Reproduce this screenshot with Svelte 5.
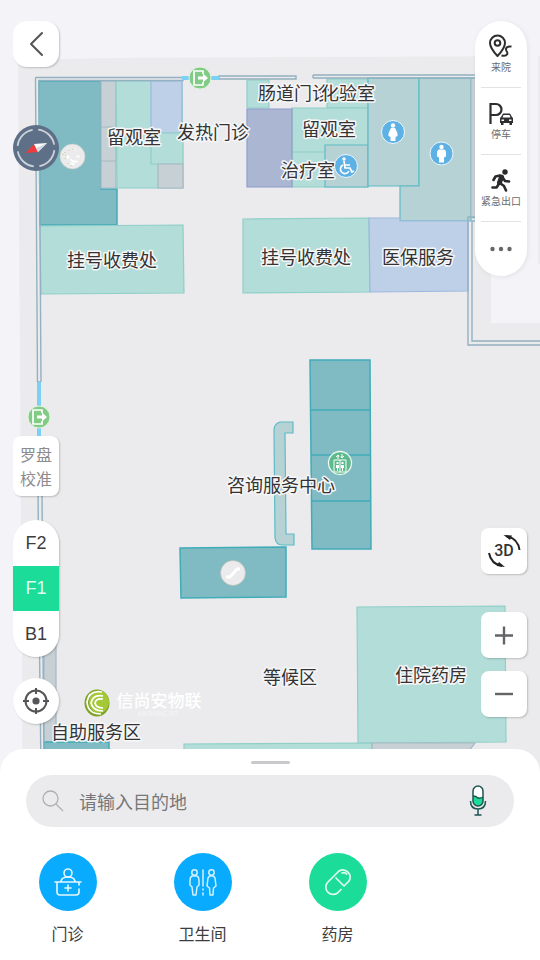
<script>
  let floor = $state('F1');
  let query = $state('');
  const floors = ['F2', 'F1', 'B1'];

  const rooms = [
    { kind: 'teal', d: 'M39 81H101V189H117V225H40Z' },
    { kind: 'grey', d: 'M101 81H116V188H101ZM101 127H116M101 161H116' },
    { kind: 'mint', d: 'M116 81H182L183 188H117Z' },
    { kind: 'blue', d: 'M151 81H182V133H151Z' },
    { kind: 'mint', d: 'M151 133H183V164H151Z' },
    { kind: 'grey', d: 'M158 164H183V188H158Z' },
    { kind: 'mint', d: 'M40 226L183 225L184 293L41 294Z' },
    { kind: 'mint', d: 'M247 80H269V108H247Z' },
    { kind: 'mint', d: 'M327 79H368V108H327Z' },
    { kind: 'mint', d: 'M292 108H368V187H292ZM292 152H325' },
    { kind: 'violet', d: 'M247 109H292V187H247Z' },
    { kind: 'sage', d: 'M325 145H368V187H325Z' },
    { kind: 'sage', d: 'M368 78H419V186H368Z' },
    { kind: 'sage', d: 'M419 78H471V221H400V186H419Z' },
    { kind: 'mint', d: 'M243 219L369 218L370 292L243 293Z' },
    { kind: 'blue', d: 'M369 218H400V221H468V291L370 292Z' },
    { kind: 'grey', d: 'M471 78H480V218H471Z' },
    { kind: 'teal', d: 'M310 360H370L371 549H312ZM311 410H370M311 455H371M311 501H371' },
    { kind: 'sage', d: 'M293 422H280Q274 424 274 430L275 538Q276 545 282 545H294V534H286L285 433H293Z' },
    { kind: 'teal', d: 'M180 548L286 547V597L181 598Z' },
    { kind: 'mint', d: 'M357 607L505 606L506 742L358 743Z' },
    { kind: 'mint', d: 'M184 744L372 743V760H184Z' },
    { kind: 'grey', d: 'M372 743H475L462 760H372Z' },
    { kind: 'grey', d: 'M44 640H56V742H44Z' },
    { kind: 'teal', d: 'M44 742H109V770H44Z' }
  ];

  const labels = [
    { x: 134, y: 144, t: '留观室' },
    { x: 213, y: 139, t: '发热门诊' },
    { x: 294, y: 100, t: '肠道门诊' },
    { x: 348, y: 100, t: '化验室' },
    { x: 329, y: 136, t: '留观室' },
    { x: 308, y: 177, t: '治疗室' },
    { x: 112, y: 267, t: '挂号收费处' },
    { x: 306, y: 264, t: '挂号收费处' },
    { x: 418, y: 264, t: '医保服务' },
    { x: 281, y: 492, t: '咨询服务中心' },
    { x: 290, y: 684, t: '等候区' },
    { x: 431, y: 682, t: '住院药房' },
    { x: 96, y: 739, t: '自助服务区' }
  ];
  const exits = [{ x: 200, y: 78 }, { x: 39, y: 417 }];
</script>

<main class="app">
  <svg class="map" viewBox="0 0 540 960" preserveAspectRatio="xMidYMin slice" role="img" aria-label="F1">
    <path class="ground" d="M18 60L115 58L540 56V960H24Z" />
    <path class="outside" d="M491 56H538V264H540V323H491Z" />
    {#each rooms as r}<path class={r.kind} d={r.d} />{/each}
    <g class="wall">
      <path d="M35.500 77.500H183V80.500H39L41 382M35.500 77.500L37.500 382M37.500 382H41M38 490L39.500 650L41 770M42 490L43 650L44 770" />
      <path d="M219 76H296V79H219ZM313 75H480M313 78H480M313 75V78" />
      <path d="M480 217H468V345H540M480 221H472V341H540" />
    </g>
    <path class="door" d="M182 78H219M39 382V440" />
    <g class="names">
      {#each labels as l}<text x={l.x} y={l.y}>{l.t}</text>{/each}
    </g>
    {#each exits as e}
      <g transform="translate({e.x} {e.y})">
        <circle r="11" fill="#82cb84" stroke="#e4f2e5" stroke-width="1" />
        <path d="M3-4V-7H-6V7H3V4" fill="none" stroke="#fff" stroke-width="1.700" />
        <path d="M-2-1.500H3V-4.500L8 0L3 4.500V1.500H-2Z" fill="#fff" />
      </g>
    {/each}
    <g transform="translate(393 132)">
      <circle r="11.500" fill="#5eb1e5" stroke="#eff8fd" />
      <circle cy="-6.500" r="2.200" fill="#fff" />
      <path d="M-2-4H2Q5 1 4.500 4L2.500 5V9H-2.500V5L-4.500 4Q-5 1-2-4Z" fill="#fff" />
    </g>
    <g transform="translate(441.500 153.500)">
      <circle r="11.500" fill="#5eb1e5" stroke="#eff8fd" />
      <circle cy="-6.500" r="2.200" fill="#fff" />
      <path d="M-3-4H3L4.500-2V3L2.500 4V9H-2.500V4L-4.500 3V-2Z" fill="#fff" />
    </g>
    <g transform="translate(346 166)">
      <circle r="11.500" fill="#5eb1e5" stroke="#eff8fd" />
      <circle cx="-2" cy="-7" r="1.700" fill="#fff" />
      <path d="M-2-5L-1 2H4L6 6L8 5M-1-1H4M-3-1A4.500 4.500 0 1 0 3 5" fill="none" stroke="#fff" stroke-width="1.700" />
    </g>
    <g transform="translate(340 463)">
      <circle r="11.500" fill="#5cba8c" stroke="#eef8f2" stroke-width="1.300" />
      <path d="M-6-3H6V9H-6ZM0-3V9M-2-4V-8M-4-6L-2-8L-1-6M2-9V-5M1-7L2-5L4-7" fill="none" stroke="#fff" />
      <path d="M-4 2H-1V5H-2V8H-3V5H-4ZM1 2H4V5H3V8H2V5H1ZM-3.500-1H-1.500V1H-3.500ZM1.500-1H3.500V1H1.500Z" fill="#fff" />
    </g>
    <g transform="translate(233 573)">
      <circle r="12.500" fill="#ebebed" stroke="#b9b9ad" stroke-width=".600" />
      <path d="M-7 4H-3L4-4H7" fill="none" stroke="#fff" stroke-width="3" stroke-linejoin="round" />
    </g>
    <g transform="translate(72.500 156.500)">
      <circle r="12.500" fill="#ebebed" stroke="#c8cdbf" stroke-width=".600" />
      <path d="M-6-1L-4 1L-5 2M-2 3L1 5H5M4 0H7M2-7H3M-2 7L2 8" fill="none" stroke="#fff" stroke-width="2" />
      <path d="M-10-2H-9M-8-4H-7M-7-1H-6M-8 2H-7M-5 7H-4M-2 9H-1M0-7H1M-4-6H-3" stroke="#c9c984" />
    </g>
    <g class="brand">
      <ellipse cx="97" cy="703" rx="12.500" ry="13.500" fill="#7fa329" />
      <ellipse cx="99" cy="702" rx="10" ry="11" fill="#a5c936" />
      <path d="M102 692Q89 690 87 702Q88 714 101 714M103 696Q93 694 91 703Q93 711 103 711M103 699Q96 698 95 703Q96 708 103 708" fill="none" stroke="#fff" stroke-width="1.700" />
      <text class="brand-name" x="159" y="707">信尚安物联</text>
      <text class="brand-sub" x="158" y="716">XINSHANG IOT</text>
    </g>
  </svg>

  <div class="controls">
    <div class="left">
      <button class="tile" aria-label="返回">
        <svg width="46" height="46" viewBox="0 0 46 46"><path d="M29 12L18 23L29 34" fill="none" stroke="#555558" stroke-width="2" stroke-linecap="round" stroke-linejoin="round" /></svg>
      </button>
      <button class="compass" aria-label="指南针">
        <svg width="46" height="46" viewBox="0 0 46 46">
          <circle cx="23" cy="23" r="23" fill="#5e7087" />
          <circle cx="23" cy="23" r="18.500" fill="none" stroke="#ccd3da" stroke-width="1.800" pathLength="100" stroke-dasharray="20 5" stroke-dashoffset="-2" />
          <path d="M12.500 28L21 19L25 27Z" fill="#ed3b3e" /><path d="M21 19L34 18L25 27Z" fill="#fff" /><path d="M25 27L34 18L23 23Z" fill="#d5d9de" />
        </svg>
      </button>
      <button class="tile calibrate">罗盘<br />校准</button>
      <div class="floors">
        {#each floors as f}
          <button class:active={floor === f} aria-pressed={floor === f} onclick={() => (floor = f)}>{f}</button>
        {/each}
      </div>
      <button class="tile round" aria-label="定位">
        <svg width="46" height="46" viewBox="0 0 46 46"><g fill="none" stroke="#565659" stroke-width="2"><circle cx="23" cy="23" r="10.500" /><path d="M23 10V16M23 30V36M10 23H16M30 23H36" /></g><circle cx="23" cy="23" r="3.600" fill="#565659" /></svg>
      </button>
    </div>

    <div class="right">
      <nav class="quick">
        <button>
          <svg width="26" height="26" viewBox="0 0 26 26" fill="none" stroke="#2e2e30" stroke-width="2"><path d="M9.500 23Q2 15 2 10A7.500 7.500 0 0 1 17 10Q17 15 9.500 23Z" stroke-linejoin="round" /><circle cx="9.500" cy="10" r="2.800" /><path d="M13.500 22.500C20 24 20 20 18.500 18C17 15 19 13 23.500 13.500" /></svg>
          <span>来院</span>
        </button>
        <button>
          <svg width="26" height="26" viewBox="0 0 26 26"><path d="M2.500 24V4H8A5.500 5.500 0 0 1 8 15H2.500" fill="none" stroke="#2e2e30" stroke-width="2.200" /><path d="M13 17L15 13.500H22L24 17L25 18V23H24V25H21.500V23H15.500V25H13V23H12V18Z" fill="#2e2e30" /><path d="M15.500 15H21.500L22.500 17.500H14.500ZM13.500 19.500H16V21H13.500ZM21 19.500H23.500V21H21Z" fill="#fff" /></svg>
          <span>停车</span>
        </button>
        <button>
          <svg width="26" height="26" viewBox="0 0 26 26" fill="none" stroke="#2a2a2c" stroke-linecap="round" stroke-linejoin="round"><circle cx="17" cy="5" r="2.700" fill="#2a2a2c" stroke="none" /><path d="M13.500 10L11.500 15.500" stroke-width="5" /><path d="M12 8.500L7.500 9.500L5.500 13M15 11L17 14L21 14.500M12.500 16.500L16 19L18 23.500M10.500 17.500L8.500 20.500H4.500" stroke-width="2.600" /></svg>
          <span>紧急出口</span>
        </button>
        <button class="more" aria-label="更多">
          <svg width="26" height="6" viewBox="0 0 26 6" fill="#666669"><circle cx="4.500" cy="3" r="2.200" /><circle cx="13" cy="3" r="2.200" /><circle cx="21.500" cy="3" r="2.200" /></svg>
        </button>
      </nav>
      <button class="tile mode">
        <svg width="46" height="46" viewBox="0 0 46 46"><path d="M25 8Q37 10 38.500 22M8 25Q10 36 21 38" fill="none" stroke="#222" stroke-width="2" /><path d="M22.500 7L31 7.500L29 12ZM24 39L15.500 38L18 34Z" fill="#222" /></svg>
        <span>3D</span>
      </button>
      <button class="tile" aria-label="放大"><svg width="46" height="46" viewBox="0 0 46 46"><path d="M14 23.500H32M23 14.500V32.500" stroke="#646467" stroke-width="2.400" /></svg></button>
      <button class="tile minus" aria-label="缩小"><svg width="46" height="46" viewBox="0 0 46 46"><path d="M14 23H32" stroke="#646467" stroke-width="2.400" /></svg></button>
    </div>
  </div>

  <section class="sheet">
    <div class="handle"></div>
    <div class="search">
      <label for="dest" aria-label="搜索"><svg width="22" height="22" viewBox="0 0 22 22" fill="none" stroke="#b0b0b3" stroke-width="1.300"><circle cx="8.500" cy="8.500" r="7.500" /><path d="M14 14L21 21" /></svg></label>
      <input id="dest" type="text" placeholder="请输入目的地" bind:value={query} />
      <button aria-label="语音输入">
        <svg width="20" height="32" viewBox="0 0 20 32"><rect x="5" y="1" width="10" height="20" rx="5" fill="#fff" /><path d="M5 11L10 13L15 12V16A5 5 0 0 1 5 16Z" fill="#1bdc9a" /><g fill="none" stroke="#1d5650" stroke-width="1.500"><rect x="5" y="1" width="10" height="20" rx="5" /><path d="M5 11Q8 11 10 13Q12 14 15 12M2.500 16Q2.500 24 10 24Q17.500 24 17.500 16M10 24V30M6.500 30H13.500" /></g></svg>
      </button>
    </div>
    <nav class="places">
      <a href="#clinic">
        <svg width="58" height="58" viewBox="0 0 58 58"><circle cx="29" cy="29" r="29" fill="#08abfd" /><g fill="none" stroke="#e6f7ff" stroke-width="1.600" stroke-linecap="round" stroke-linejoin="round"><circle cx="29" cy="20" r="4" /><path d="M22 28Q23 24 29 24Q35 24 36 28M16 29H42M18 29V39Q18 42 21 42H37Q40 42 40 39V36M40 29V32M29 32V38M26 35H32" /></g></svg>
        <span>门诊</span>
      </a>
      <a href="#toilet">
        <svg width="58" height="58" viewBox="0 0 58 58"><circle cx="29" cy="29" r="29" fill="#08abfd" /><g fill="none" stroke="#d4f1ff" stroke-width="1.500" stroke-linecap="round" stroke-linejoin="round"><circle cx="20.500" cy="19.500" r="2.700" /><path d="M18 23H23Q25 24 25 27V32L23 34L22 42H19L18 34L16 32V27Q16 24 18 23Z" /><circle cx="37.500" cy="19.500" r="2.700" /><path d="M35.500 23H39.500L41 25L42 33L39.500 35L39 42H36L35.500 35L33 33L34 25ZM29 17V33M29 36V37M29 40V42" /></g></svg>
        <span>卫生间</span>
      </a>
      <a href="#pharmacy">
        <svg width="58" height="58" viewBox="0 0 58 58"><circle cx="29" cy="29" r="29" fill="#1bdc99" /><g fill="none" stroke="#e2fbf2" stroke-width="1.700" stroke-linecap="round" stroke-linejoin="round"><path d="M35 33L40 28A7.300 7.300 0 0 0 30 18L18.500 29.500A7.300 7.300 0 0 0 28.500 40L32 36.500M27 25L35 33M33 20Q36 19 37.500 21" /></g></svg>
        <span>药房</span>
      </a>
    </nav>
  </section>
</main>

<style>
  :global(body) { margin: 0; }
  .app {
    position: relative;
    display: flex;
    flex-direction: column;
    min-height: 100vh;
    overflow: hidden;
    background: #f3f3f8;
    color: #3d3d40;
    font-family: "Noto Sans CJK SC", sans-serif;
  }
  button { padding: 0; border: 0; background: #fff; color: inherit; font: inherit; cursor: pointer; }
  svg { display: block; flex: none; }

  .map { position: absolute; inset: 0; width: 100%; height: 100%; }
  .ground { fill: #ebebed; }
  .outside { fill: #f3f3f8; }
  .teal { fill: #80bbc4; stroke: #40acb8; stroke-width: 1.5; }
  .mint { fill: #b3ddd8; stroke: #8fcfc7; stroke-width: 1.2; }
  .sage { fill: #b7d2d5; stroke: #5dbcc5; stroke-width: 1.2; }
  .grey { fill: #c6d0d5; stroke: #a6b8c4; stroke-width: 1.2; }
  .blue { fill: #bed0e7; stroke: #9cb7df; stroke-width: 1.2; }
  .violet { fill: #abb6d3; stroke: #8e9ecb; stroke-width: 1.2; }
  .wall { fill: none; stroke: #93b1c0; stroke-width: 1.4; }
  .door { fill: none; stroke: #7bd1f4; stroke-width: 4; }
  .names text {
    font-size: 18px;
    text-anchor: middle;
    fill: #333336;
    stroke: #f7f7f8;
    stroke-width: 3px;
    stroke-linejoin: round;
    paint-order: stroke;
  }
  .brand text { fill: #fff; text-anchor: middle; }
  .brand-name { font-size: 17px; font-weight: 500; }
  .brand-sub { font-size: 6px; opacity: .6; }

  .controls {
    position: relative;
    flex: 1;
    display: flex;
    justify-content: space-between;
    padding: 21px 13px 0;
  }
  .left, .right { display: flex; flex-direction: column; }
  .left { padding-bottom: 25px; }
  .right { align-items: flex-end; padding-bottom: 32px; }
  .tile { width: 46px; height: 46px; border-radius: 8px; box-shadow: 1px 1px 2px #0003; }
  .left > .tile:first-child { border-radius: 14px; }
  .compass { margin-top: 58px; border-radius: 50%; background: none; }
  .left > .calibrate { height: 60px; margin-top: auto; color: #8c8c90; font-size: 16px; line-height: 24px; }
  .floors {
    display: flex;
    flex-direction: column;
    margin: 24px 0 21px;
    border-radius: 23px;
    overflow: hidden;
    box-shadow: 1px 1px 2px #0003;
  }
  .floors button { width: 46px; height: 46px; font-family: "Liberation Sans", Arial, sans-serif; font-size: 18px; }
  .floors button.active { height: 45px; background: #1bdc99; color: #dcfff2; }
  .round { border-radius: 50%; }

  .quick {
    display: flex;
    flex-direction: column;
    box-sizing: border-box;
    width: 52px;
    padding: 0 6px;
    border-radius: 26px;
    background: #fff;
    box-shadow: 1px 1px 5px #00000014;
  }
  .quick button {
    display: flex;
    flex-direction: column;
    align-items: center;
    justify-content: center;
    height: 67px;
    background: none;
    border-bottom: 1px solid #e3e3e5;
  }
  .quick .more { height: 54px; border: 0; }
  .quick span { color: #6a6a6d; font-size: 10px; line-height: 16px; white-space: nowrap; }
  .mode { position: relative; margin-top: auto; margin-bottom: 38px; }
  .mode span {
    position: absolute;
    inset: 0;
    font: 500 16px/46px Roboto, sans-serif;
    color: #333;
  }
  .minus { margin-top: 13px; }

  .sheet {
    position: relative;
    box-sizing: border-box;
    padding: 12px 0 15px;
    border-radius: 24px 24px 0 0;
    background: #fff;
  }
  .handle { width: 39px; height: 3px; margin: 0 auto 11px; border-radius: 2px; background: #c9c9cc; }
  .search {
    display: flex;
    align-items: center;
    height: 52px;
    margin: 0 26px 26px;
    padding: 0 26px 0 16px;
    border-radius: 26px;
    background: #ebebed;
  }
  .search input {
    flex: 1;
    min-width: 0;
    margin-left: 15px;
    padding: 0;
    border: 0;
    outline: 0;
    background: none;
    color: #3d3d40;
    font: inherit;
    font-size: 18px;
  }
  .search input::placeholder { color: #77777a; opacity: 1; }
  .search button { background: none; }
  .places { display: grid; grid-template-columns: repeat(4, 1fr); }
  .places a {
    display: flex;
    flex-direction: column;
    align-items: center;
    gap: 10px;
    color: inherit;
    font-size: 16px;
    line-height: 24px;
    text-decoration: none;
  }
</style>
